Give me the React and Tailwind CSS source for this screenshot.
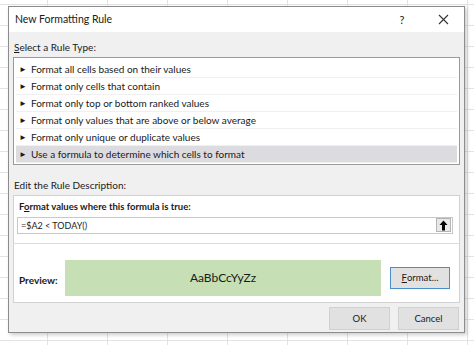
import React from "react";

const rules = [
  "Format all cells based on their values",
  "Format only cells that contain",
  "Format only top or bottom ranked values",
  "Format only values that are above or below average",
  "Format only unique or duplicate values",
  "Use a formula to determine which cells to format",
];

export default function App() {
  return (
    <div
      className="w-[474px] h-[345px] overflow-hidden bg-white pt-[6px] pl-[8px] bg-[linear-gradient(to_right,#e3e3e3_1px,transparent_1px),linear-gradient(to_bottom,#e3e3e3_1px,transparent_1px)] bg-size-[60px_21px] bg-position-[47px_4px] text-[#1a1a1a]"
      style={{ fontFamily: 'Lato, "Noto Sans", sans-serif' }}
    >
      <div className="w-[457px] h-[327px] border border-[#8c8c8c] bg-[#f0f0f0] shadow-[2px_2px_4px_rgba(0,0,0,0.2)] flex flex-col">
        {/* Title bar */}
        <div className="h-[25px] bg-white flex items-center pl-[6px] shrink-0">
          <span className="text-[10.5px] leading-none">New Formatting Rule</span>
          <span className="ml-auto text-[11px] leading-none w-[12px] text-center mr-[30px]">?</span>
          <svg width="11" height="11" viewBox="0 0 11 11" className="mr-[15px]">
            <path d="M1 1 L10 10 M10 1 L1 10" stroke="#333" strokeWidth="1.1" />
          </svg>
        </div>

        <div className="flex-1 flex flex-col px-[4px]">
          <div className="text-[10px] leading-none mt-[10px] ml-[1px]">
            <span className="underline">S</span>elect a Rule Type:
          </div>
          <div className="mt-[5px] h-[108px] border border-[#9a9a9a] bg-white px-[2px] pt-[3px] flex flex-col">
            {rules.map((r, i) => (
              <div
                key={i}
                className={
                  "h-[17px] flex items-center gap-[4px] pl-[3px] text-[10px] border-b border-[#f0f0f0] " +
                  (i === 5 ? "bg-[#dcdce0]" : "")
                }
              >
                <span className="text-[8px] leading-none">►</span>
                <span className="leading-none">{r}</span>
              </div>
            ))}
          </div>

          <div className="text-[10px] leading-none mt-[15px] ml-[1px]">Edit the Rule Description:</div>
          <div className="mt-[5px] h-[108px] border border-[#d2d2d2] bg-white flex flex-col">
            <div className="px-[4px] pt-[6px] pb-[9px] border-b border-[#dcdcdc]">
              <div className="text-[9.5px] font-bold leading-none ml-[1px]">
                F<span className="underline">o</span>rmat values where this formula is true:
              </div>
              <div className="mt-[5px] mr-[2px] -ml-[1px] h-[17px] border border-[#c8c8c8] flex items-center pl-[3px] pr-[1px]">
                <span className="text-[9px] leading-none">=$A2 &lt; TODAY()</span>
                <div className="ml-auto w-[15px] h-[14px] bg-[#e8e8e8] border border-[#b5b5b5] flex items-center justify-center">
                  <svg width="9" height="11" viewBox="0 0 9 11">
                    <path d="M4.5 0.5 L8.5 5 L6 5 L6 10.5 L3 10.5 L3 5 L0.5 5 Z" fill="#000" />
                  </svg>
                </div>
              </div>
            </div>
            <div className="flex-1 flex items-start pl-[5px] pr-[9px] pt-[16px]">
              <span className="text-[10px] font-bold leading-none mt-[15px] w-[46px]">Preview:</span>
              <div className="w-[316px] h-[36px] bg-[#c6dfb4] flex items-center justify-center text-[12px] leading-none">
                AaBbCcYyZz
              </div>
              <div className="ml-auto mt-[7px] w-[60px] h-[22px] bg-[#e1e1e1] border border-[#4a8ccc] flex items-center justify-center text-[9.5px] leading-none">
                <span className="underline">F</span>ormat...
              </div>
            </div>
          </div>

          <div className="flex justify-end gap-[8px] mt-[4px] mr-[1px]">
            <div className="w-[61px] h-[23px] bg-[#e1e1e1] border border-[#d0d0d0] flex items-center justify-center text-[9.5px] leading-none">
              OK
            </div>
            <div className="w-[61px] h-[23px] bg-[#e1e1e1] border border-[#d0d0d0] flex items-center justify-center text-[9.5px] leading-none">
              Cancel
            </div>
          </div>
        </div>
      </div>
    </div>
  );
}
